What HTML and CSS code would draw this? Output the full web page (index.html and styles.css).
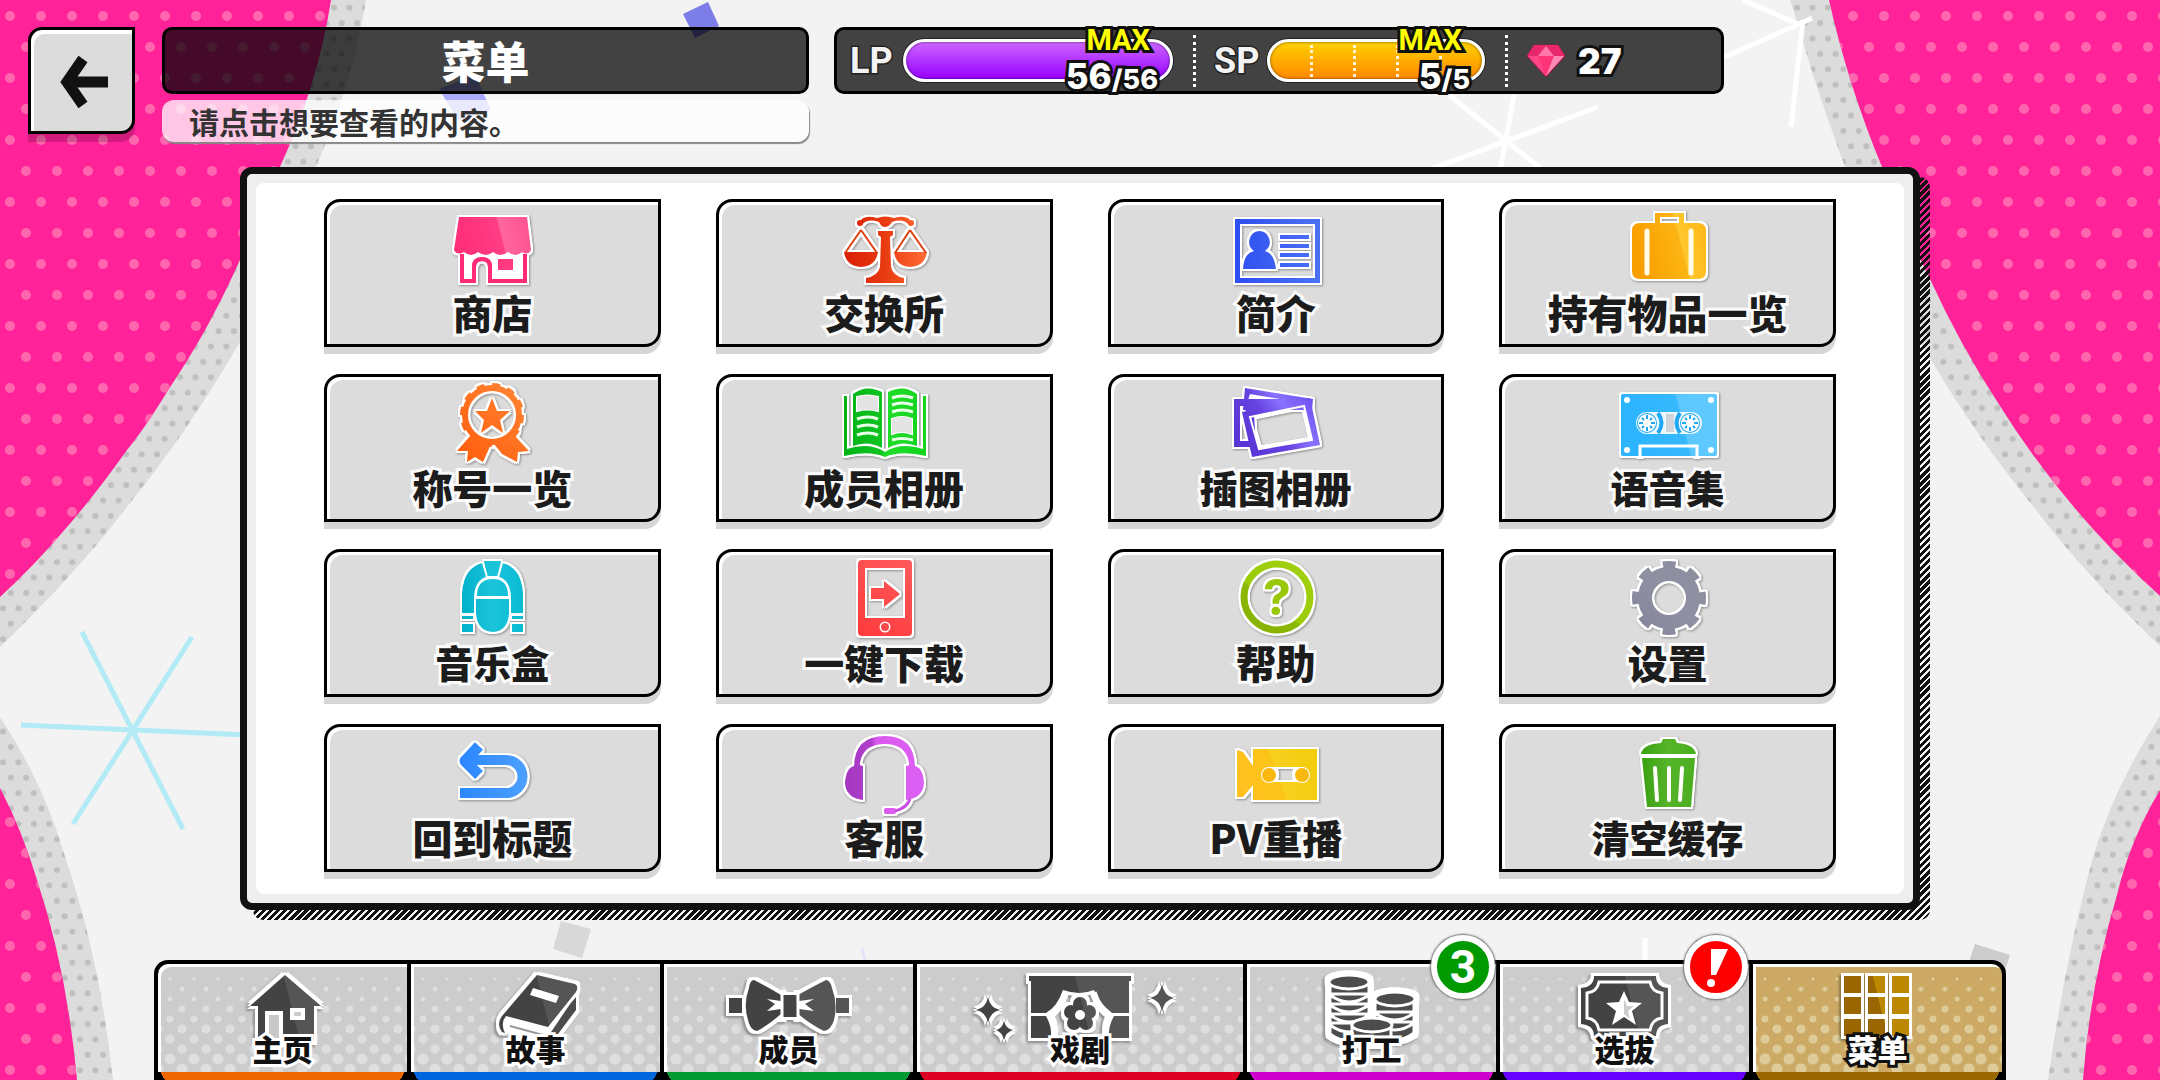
FILE: index.html
```html
<!DOCTYPE html>
<html lang="zh-CN">
  <head>
    <meta charset="utf-8" />
    <title>菜单</title>
    <link rel="stylesheet" href="styles.css">
  </head>
  <body>
    <!-- Background -->
    <svg class="backdrop" viewBox="0 0 2160 1080" preserveAspectRatio="none" aria-hidden="true">
      <defs>
        <pattern id="dots-left" x="-5" y="1" width="31" height="62" patternUnits="userSpaceOnUse">
          <circle cx="15" cy="15" r="5" fill="#ff66ae" />
          <circle cx="0" cy="46" r="5" fill="#ff66ae" />
          <circle cx="31" cy="46" r="5" fill="#ff66ae" />
        </pattern>
        <pattern id="dots-right" x="9" y="1" width="31" height="62" patternUnits="userSpaceOnUse">
          <circle cx="15" cy="15" r="5" fill="#ff66ae" />
          <circle cx="0" cy="46" r="5" fill="#ff66ae" />
          <circle cx="31" cy="46" r="5" fill="#ff66ae" />
        </pattern>
        <pattern id="dots-gray" x="3" y="0" width="15.4" height="30.8" patternUnits="userSpaceOnUse">
          <circle cx="7.7" cy="7.7" r="3" fill="#bfbfbf" />
          <circle cx="0" cy="23.1" r="3" fill="#bfbfbf" />
          <circle cx="15.4" cy="23.1" r="3" fill="#bfbfbf" />
        </pattern>
        <path id="edge-tl" d="M0 0H366Q352 85 315 169C285 240 272 290 240 342C200 410 165 460 133 499Q80 570 0 647Z" />
        <path id="edge-bl" d="M0 717Q45 785 67 863Q100 960 113 1080H0Z" />
        <path id="edge-tr" d="M1790 0L1800 31Q1815 85 1845 167Q1870 255 1930 358Q1975 435 2033 506Q2085 575 2160 646V0Z" />
        <path id="edge-br" d="M2160 716Q2115 785 2093 857Q2065 960 2048 1080H2160Z" />
        <path id="pink-tl" d="M0 0H331Q318 85 279 169Q262 220 240 260C215 315 195 350 167 392Q145 428 127 450Q95 495 67 527Q35 565 0 597Z" />
        <path id="pink-bl" d="M0 788Q22 830 37 880Q67 970 77 1080H0Z" />
        <path id="pink-tr" d="M1829 0Q1848 85 1882 167Q1903 225 1930 279Q1960 345 2000 406Q2065 510 2160 596V0Z" />
        <path id="pink-br" d="M2160 790Q2130 840 2117 895Q2090 985 2083 1080H2160Z" />
      </defs>
      <rect width="2160" height="1080" fill="#f3f3f3" />
      <g fill="#dcdcdc">
        <use href="#edge-tl" /><use href="#edge-bl" /><use href="#edge-tr" /><use href="#edge-br" />
      </g>
      <g fill="url(#dots-gray)">
        <use href="#edge-tl" /><use href="#edge-bl" /><use href="#edge-tr" /><use href="#edge-br" />
      </g>
      <g fill="#ff2299">
        <use href="#pink-tl" /><use href="#pink-bl" /><use href="#pink-tr" /><use href="#pink-br" />
      </g>
      <g fill="url(#dots-left)"><use href="#pink-tl" /><use href="#pink-bl" /></g>
      <g fill="url(#dots-right)"><use href="#pink-tr" /><use href="#pink-br" /></g>
      <g stroke="#b2eaf5" stroke-width="5">
        <path d="M21 725L247 735M82 632L183 829M192 637L73 824" />
      </g>
      <g stroke="#fff" stroke-width="5" fill="none">
        <path d="M1598 107L1415 175M1449 95L1545 172M1514 95L1500 172" />
        <path d="M1706 65L1797 25L1812 18M1743 0L1800 25M1803 20L1791 127M1645 938V962" />
      </g>
      <path d="M683 14L708 2L719 26L695 38Z" fill="#7d7de8" />
      <path d="M439 89L475 75L491 110L458 120Z" fill="#aaaaff" />
      <path d="M561 921L591 929L582 958L553 949Z" fill="#d8d8d8" />
      <path d="M1975 944L2010 955L2005 970L1969 962Z" fill="#cccccc" />
      <path d="M862 948L865 962" stroke="#e4e4fb" stroke-width="3" />
    </svg>

    <!-- Icon colours -->
    <svg class="defs" aria-hidden="true">
      <defs>
        <linearGradient id="g-shop" gradientUnits="userSpaceOnUse" x1="10" y1="0" x2="90" y2="-20"><stop offset="0" stop-color="#ff2f78" /><stop offset=".48" stop-color="#ff3d85" /><stop offset=".5" stop-color="#ff669e" /><stop offset="1" stop-color="#ff4a8c" /></linearGradient>
        <linearGradient id="g-scale" gradientUnits="userSpaceOnUse" x1="10" y1="0" x2="90" y2="0"><stop offset="0" stop-color="#d81e06" /><stop offset=".5" stop-color="#e83a10" /><stop offset="1" stop-color="#ff6a33" /></linearGradient>
        <linearGradient id="g-id" gradientUnits="userSpaceOnUse" x1="10" y1="0" x2="90" y2="0"><stop offset="0" stop-color="#2f4ff0" /><stop offset="1" stop-color="#4a70f5" /></linearGradient>
        <linearGradient id="g-case" gradientUnits="userSpaceOnUse" x1="10" y1="0" x2="90" y2="-20"><stop offset="0" stop-color="#f9a000" /><stop offset=".5" stop-color="#fdb514" /><stop offset=".52" stop-color="#ffc72e" /><stop offset="1" stop-color="#fdb10c" /></linearGradient>
        <linearGradient id="g-medal" gradientUnits="userSpaceOnUse" x1="10" y1="80" x2="90" y2="0"><stop offset="0" stop-color="#ff5a08" /><stop offset="1" stop-color="#ff8a3a" /></linearGradient>
        <linearGradient id="g-book" gradientUnits="userSpaceOnUse" x1="10" y1="0" x2="90" y2="0"><stop offset="0" stop-color="#00b418" /><stop offset=".48" stop-color="#12c41f" /><stop offset=".5" stop-color="#20dc28" /><stop offset="1" stop-color="#14d41e" /></linearGradient>
        <linearGradient id="g-photo" gradientUnits="userSpaceOnUse" x1="10" y1="80" x2="90" y2="20"><stop offset="0" stop-color="#5230d0" /><stop offset=".5" stop-color="#6643e0" /><stop offset=".7" stop-color="#8a72ff" /><stop offset="1" stop-color="#6e4cf2" /></linearGradient>
        <linearGradient id="g-tape" gradientUnits="userSpaceOnUse" x1="3" y1="0" x2="99" y2="-24"><stop offset="0" stop-color="#2db4ff" /><stop offset=".49" stop-color="#36b8fc" /><stop offset=".51" stop-color="#5cc8ff" /><stop offset="1" stop-color="#62caff" /></linearGradient>
        <linearGradient id="g-juke" gradientUnits="userSpaceOnUse" x1="20" y1="0" x2="80" y2="0"><stop offset="0" stop-color="#00b0cc" /><stop offset=".5" stop-color="#1cc4da" /><stop offset="1" stop-color="#08bcd4" /></linearGradient>
        <linearGradient id="g-phone" gradientUnits="userSpaceOnUse" x1="25" y1="80" x2="78" y2="0"><stop offset="0" stop-color="#ff3a3c" /><stop offset="1" stop-color="#ff5c5c" /></linearGradient>
        <linearGradient id="g-help" gradientUnits="userSpaceOnUse" x1="20" y1="80" x2="80" y2="0"><stop offset="0" stop-color="#86b000" /><stop offset=".4" stop-color="#8cb800" /><stop offset=".42" stop-color="#9ccc08" /><stop offset="1" stop-color="#a0d010" /></linearGradient>
        <linearGradient id="g-gear" gradientUnits="userSpaceOnUse" x1="15" y1="80" x2="88" y2="0"><stop offset="0" stop-color="#83839a" /><stop offset=".5" stop-color="#9090a4" /><stop offset="1" stop-color="#8a8c9a" /></linearGradient>
        <linearGradient id="g-back" gradientUnits="userSpaceOnUse" x1="15" y1="0" x2="85" y2="0"><stop offset="0" stop-color="#2a86ff" /><stop offset="1" stop-color="#4da0ff" /></linearGradient>
        <linearGradient id="g-head" gradientUnits="userSpaceOnUse" x1="10" y1="0" x2="90" y2="0"><stop offset="0" stop-color="#a436c0" /><stop offset=".35" stop-color="#b040cc" /><stop offset=".4" stop-color="#dc58f0" /><stop offset="1" stop-color="#dc60f4" /></linearGradient>
        <linearGradient id="g-cam" gradientUnits="userSpaceOnUse" x1="10" y1="60" x2="92" y2="30"><stop offset="0" stop-color="#ffc020" /><stop offset=".5" stop-color="#fcc418" /><stop offset=".52" stop-color="#f8d020" /><stop offset="1" stop-color="#f2cc0c" /></linearGradient>
        <linearGradient id="g-trash" gradientUnits="userSpaceOnUse" x1="22" y1="0" x2="78" y2="0"><stop offset="0" stop-color="#3aa010" /><stop offset=".5" stop-color="#55b42a" /><stop offset="1" stop-color="#4aae1e" /></linearGradient>
        <linearGradient id="g-dark" gradientUnits="userSpaceOnUse" x1="0" y1="25" x2="140" y2="-10"><stop offset=".5" stop-color="#434343" /><stop offset=".5" stop-color="#555555" /></linearGradient>
        <linearGradient id="g-dark-wide" gradientUnits="userSpaceOnUse" x1="0" y1="60" x2="240" y2="0"><stop offset=".5" stop-color="#434343" /><stop offset=".5" stop-color="#555555" /></linearGradient>
        <linearGradient id="g-gold" gradientUnits="userSpaceOnUse" x1="0" y1="45" x2="140" y2="10"><stop offset=".5" stop-color="#996600" /><stop offset=".5" stop-color="#bb8800" /></linearGradient>
      </defs>
    </svg>

    <div class="screen">
      <header class="top">
        <button class="back" type="button" aria-label="返回">
          <svg viewBox="0 0 60 60"><path d="M56 31H15M31 8L15 31L31 54" fill="none" stroke="#111" stroke-width="11" /></svg>
        </button>
        <div class="heading">
          <h1 class="title">菜单</h1>
          <p class="hint">请点击想要查看的内容。</p>
        </div>
        <div class="status">
          <span class="status-name">LP</span>
          <div class="gauge gauge-lp">
            <span class="gauge-max">MAX</span>
            <span class="gauge-value">56<small>/56</small></span>
          </div>
          <i class="divider"></i>
          <span class="status-name">SP</span>
          <div class="gauge gauge-sp">
            <i class="notch"></i><i class="notch"></i><i class="notch"></i><i class="notch"></i>
            <span class="gauge-max">MAX</span>
            <span class="gauge-value">5<small>/5</small></span>
          </div>
          <i class="divider"></i>
          <svg class="gem" viewBox="0 0 40 34" aria-hidden="true">
            <path d="M8 1H32L39 12L20 33L1 12Z" fill="#ff4488" stroke="#8c1440" />
            <path d="M8 1H32L39 12H1Z" fill="#e8286c" />
            <path d="M12 12L20 2L28 12Z" fill="#ff77aa" />
            <path d="M12 12H28L20 32Z" fill="#ff3377" />
            <path d="M28 12H38L20 32Z" fill="#ff88b4" />
          </svg>
          <span class="gem-count">27</span>
        </div>
      </header>

      <main class="panel">
        <div class="grid">
          <button class="tile" type="button">
            <svg class="icon" viewBox="0 0 100 84">
              <path d="M17 12H85L89 45Q86 51 80 47Q74 53 66 47Q58 53 51 47Q44 53 36 47Q29 53 22 47Q15 51 12 45Z" fill="url(#g-shop)" />
              <path d="M20 49V76H32V62Q32 54 40 54Q48 54 48 62V76H83V49" fill="none" stroke="#ff2b76" stroke-width="4" />
              <path d="M24 50H80V73H51V60Q48 51 40 51Q30 51 29 60V73H24Z" fill="#fff" opacity=".7" />
              <path d="M32 76V62Q32 54 40 54Q48 54 48 62V76" fill="none" stroke="#ff2b76" stroke-width="4" />
              <rect x="56" y="54" width="15" height="11" fill="#ff3a80" />
            </svg>
            商店
          </button>
          <button class="tile" type="button">
            <svg class="icon" viewBox="0 0 100 84">
              <g fill="url(#g-scale)">
                <circle cx="26" cy="18" r="3" /><circle cx="77" cy="18" r="3" />
                <path d="M25 18Q29 9 43 13Q51 10 60 13Q74 9 78 18L75 20Q69 13 58 17Q55 22 51 22Q47 22 45 17Q33 13 28 20Z" />
                <path d="M44 26H59V30L56 32L57 62Q59 71 70 73V78H32V73Q44 71 46 62L47 32L44 30Z" />
                <path d="M10 47H44Q42 61 27 62Q12 61 10 47ZM60 47H93Q91 61 76 62Q62 61 60 47Z" />
                <path d="M27 25L11 48M27 25L43 48M76 25L61 48M76 25L92 48" stroke="#e0400f" stroke-width="2" />
              </g>
            </svg>
            交换所
          </button>
          <button class="tile" type="button">
            <svg class="icon" viewBox="0 0 100 84">
              <g fill="url(#g-id)">
                <path fill-rule="evenodd" d="M9 14H94V78H9ZM14 19V73H89V19Z" />
                <path d="M33 26A11 11 0 0 1 39 46Q48 48 50 64H17Q18 48 28 46A11 11 0 0 1 33 26Z" />
                <path d="M54 30H83V34H54ZM54 39H83V43H54ZM54 48H83V52H54ZM54 58H83V62H54Z" />
              </g>
            </svg>
            简介
          </button>
          <button class="tile" type="button">
            <svg class="icon" viewBox="0 0 100 84">
              <path fill-rule="evenodd" d="M22 18H37V8H66V18H80Q88 18 88 26V66Q88 74 80 74H22Q14 74 14 66V26Q14 18 22 18ZM42 12V18H61V12Z" fill="url(#g-case)" />
              <path d="M29 26V68M73 26V68" stroke="#fffbe8" stroke-width="5" stroke-linecap="round" />
            </svg>
            持有物品一览
          </button>

          <button class="tile" type="button">
            <svg class="icon" viewBox="0 0 100 84">
              <g fill="none" stroke="url(#g-medal)">
                <circle cx="50" cy="35" r="27" stroke-width="6" />
                <circle cx="50" cy="35" r="30" stroke-width="4" stroke-dasharray="8 7.7" />
              </g>
              <path d="M50 18L55 31H68L58 40L61 53L50 45L39 53L42 40L33 31H45Z" fill="url(#g-medal)" />
              <path d="M29 55Q38 65 49 64L41 82L33 77L25 82L26 71H15ZM72 55Q63 65 52 64L60 74L75 82L76 72L87 71Z" fill="url(#g-medal)" />
            </svg>
            称号一览
          </button>
          <button class="tile" type="button">
            <svg class="icon" viewBox="0 0 100 84">
              <g fill="url(#g-book)">
                <path d="M19 14Q32 4 48 12V68Q34 60 19 66Z" />
                <path d="M83 14Q70 4 54 12V68Q68 60 83 66Z" />
                <path d="M10 16H13V69Q35 62 51 72Q67 62 89 69V16H92V76Q67 70 51 77Q35 70 10 76Z" />
              </g>
              <path d="M23 17Q33 14 44 17V31Q33 28 23 31ZM58 39Q68 35 78 39V54Q68 50 58 54Z" fill="#e4e4e4" stroke="#fff" stroke-width="2" />
              <path d="M23 39Q34 35 44 39M23 47Q34 43 44 47M23 55Q34 51 44 55M58 18Q68 14 79 18M58 25Q68 21 79 25M58 32Q68 28 79 32M58 60Q68 57 79 60" fill="none" stroke="#e8ffe8" stroke-width="3" />
            </svg>
            成员相册
          </button>
          <button class="tile tile-small" type="button">
            <svg class="icon" viewBox="0 0 100 84">
              <g fill="url(#g-photo)" fill-rule="evenodd">
                <path d="M19 8L87 19L86 30L17 30ZM24 14L22 20H60Z" />
                <path d="M8 19H60L28 34L30 67H8ZM14 26V61H24L19 26Z" />
                <path d="M16 32L84 18L94 65L26 77ZM24 37L33 69L86 60L78 26Z" />
              </g>
              <path d="M24 37L33 69L86 60L78 26Z" fill="none" stroke="#fff" stroke-width="2" />
            </svg>
            插图相册
          </button>
          <button class="tile tile-small" type="button">
            <svg class="icon" viewBox="0 0 100 84">
              <rect x="3" y="14" width="96" height="62" rx="2" fill="url(#g-tape)" />
              <rect x="18" y="32" width="66" height="22" rx="11" fill="#eaf7ff" />
              <path d="M48 34H56V52H48Z" fill="#d0d4d8" />
              <path d="M40 33Q47 43 40 53M62 33Q55 43 62 53" fill="none" stroke="#1ea8f4" stroke-width="4" />
              <g fill="#fff" stroke="#1ea8f4" stroke-width="2"><circle cx="29" cy="43" r="9" /><circle cx="72" cy="43" r="9" /></g>
              <g stroke="#1ea8f4" stroke-width="2">
                <path d="M29 35V39M29 47V51M21 43H25M33 43H37M24 38L26 40M32 46L34 48M34 38L32 40M24 48L26 46" />
                <path d="M72 35V39M72 47V51M64 43H68M76 43H80M67 38L69 40M75 46L77 48M77 38L75 40M67 48L69 46" />
              </g>
              <path d="M22 77V66H79V77" fill="none" stroke="#fff" stroke-width="3" />
              <g fill="#fff"><circle cx="9" cy="20" r="3" /><circle cx="93" cy="20" r="3" /><circle cx="9" cy="70" r="3" /><circle cx="93" cy="70" r="3" /></g>
            </svg>
            语音集
          </button>

          <button class="tile tile-small" type="button">
            <svg class="icon" viewBox="0 0 100 84">
              <g fill="url(#g-juke)">
                <path d="M20 58V38Q22 12 41 8L45 22Q34 27 33 42V58ZM81 58V38Q79 12 60 8L56 22Q67 27 68 42V58Z" />
                <path d="M42 6H59L56 22H45Z" />
                <path d="M35 41Q35 24 51 24Q66 24 66 41Z" />
                <path d="M34 44H67V58Q66 76 51 77Q35 76 34 58Z" />
                <path d="M20 61H31V64H20ZM70 61H81V64H70ZM20 69H31V77H20ZM70 69H81V77H70Z" />
              </g>
              <path d="M41 8L45 22H56L60 8M33 58V42Q34 22 51 22Q67 22 68 42V58M34 42H67" fill="none" stroke="#fff" stroke-width="2" />
            </svg>
            音乐盒
          </button>
          <button class="tile" type="button">
            <svg class="icon" viewBox="0 0 100 84">
              <path fill-rule="evenodd" d="M28 5H74Q78 5 78 9V77Q78 81 74 81H28Q24 81 24 77V9Q24 5 28 5ZM31 13V63H71V13Z" fill="url(#g-phone)" />
              <circle cx="51" cy="72" r="4" fill="#ff4a4c" stroke="#fff" stroke-width="3" />
              <path d="M37 33H50V26L66 39L50 52V44H37Z" fill="url(#g-phone)" />
            </svg>
            一键下载
          </button>
          <button class="tile" type="button">
            <svg class="icon" viewBox="0 0 100 84">
              <circle cx="51" cy="42" r="33" fill="none" stroke="url(#g-help)" stroke-width="7" />
              <text class="icon-question" x="51" y="60" text-anchor="middle">?</text>
            </svg>
            帮助
          </button>
          <button class="tile" type="button">
            <svg class="icon" viewBox="0 0 100 84">
              <g fill="none" stroke="url(#g-gear)">
                <circle cx="51" cy="43" r="24" stroke-width="14" />
                <circle cx="51" cy="43" r="32" stroke-width="10" stroke-dasharray="12 13.13" stroke-dashoffset="6" />
              </g>
            </svg>
            设置
          </button>

          <button class="tile" type="button">
            <svg class="icon" viewBox="0 0 100 84">
              <g fill="none" stroke="url(#g-back)" stroke-width="10">
                <path d="M24 30H64A16 16 0 0 1 64 63H18" />
                <path d="M37 16L23 31L37 45" stroke-width="11" stroke-linejoin="round" />
              </g>
            </svg>
            回到标题
          </button>
          <button class="tile" type="button">
            <svg class="icon" viewBox="0 0 100 84">
              <g fill="url(#g-head)">
                <path d="M29 36V70Q12 68 11 53Q12 38 20 36Q21 6 51 6Q80 6 81 36Q89 38 90 53Q89 68 72 70V36Q76 36 75 33Q72 14 51 14Q29 14 26 33Q25 36 29 36Z" />
                <rect x="50" y="78" width="12" height="6" rx="2" />
                <path d="M76 69Q73 78 61 81" fill="none" stroke="#c84fe0" stroke-width="3" />
              </g>
            </svg>
            客服
          </button>
          <button class="tile" type="button">
            <svg class="icon" viewBox="0 0 100 84">
              <path fill-rule="evenodd" d="M27 19H91V70H27V55L17 67H11V20L17 22L27 36ZM43 37Q36 38 36 45Q36 51 43 52H76Q83 51 83 45Q83 38 76 37Z" fill="url(#g-cam)" />
              <g fill="#f9b90c" stroke="#fff" stroke-width="2"><circle cx="43" cy="45" r="7" /><circle cx="76" cy="45" r="7" /></g>
            </svg>
            PV重播
          </button>
          <button class="tile tile-small" type="button">
            <svg class="icon" viewBox="0 0 100 84">
              <path d="M43 13L45 9H57L59 13Q76 14 78 24H23Q25 14 43 13ZM24 28H77L73 77H29Z" fill="url(#g-trash)" />
              <path d="M37 38L39 70M51 38V70M64 38L62 70" stroke="#fff" stroke-width="4" stroke-linecap="round" />
            </svg>
            清空缓存
          </button>
        </div>
      </main>

      <nav class="tabs">
        <a class="tab tab-home" href="#home">
          <svg class="tab-icon" viewBox="0 0 140 80">
            <path d="M72 9L108 40H101V76H45V40H37Z" fill="url(#g-dark)" />
            <path d="M54 76V47H68V76Z" fill="#c8c8c8" stroke="#fff" stroke-width="4" />
            <rect x="79" y="44" width="11" height="8" fill="#ccc" stroke="#fff" stroke-width="4" />
          </svg>
          <span class="tab-label">主页</span>
        </a>
        <a class="tab tab-story" href="#story">
          <svg class="tab-icon" viewBox="0 0 140 80">
            <path d="M71 9L109 18Q113 20 110 26L82 61L40 50Q34 57 39 67L36 66Q30 58 36 50Z" fill="url(#g-dark)" />
            <path d="M40 52L82 63L78 75L41 64Q37 58 40 52Z" fill="#fff" />
            <path d="M44 60L77 69" stroke="#999" stroke-width="2" />
            <path d="M104 38L110 31V44L86 76L81 72Z" fill="#4c4c4c" />
            <path d="M67 22L93 30L90 37L64 29Z" fill="#fff" />
          </svg>
          <span class="tab-label">故事</span>
        </a>
        <a class="tab tab-member" href="#member">
          <svg class="tab-icon" viewBox="0 0 140 80">
            <g fill="url(#g-dark)">
              <path d="M10 32H23V47H10ZM117 32H130V47H117Z" />
              <path d="M35 14Q47 20 62 29V48Q48 60 38 65Q31 64 29 54Q24 38 30 22Q31 14 35 14Z" />
              <path d="M107 14Q95 20 79 29V48Q94 60 105 65Q112 64 115 54Q119 38 113 22Q111 14 107 14Z" />
              <rect x="64" y="29" width="14" height="22" />
            </g>
            <path d="M63 27V53M79 27V53" stroke="#fff" stroke-width="3" />
            <path d="M62 35L48 33L56 38L48 45L62 43M80 35L95 33L86 38L95 45L80 43" fill="#fff" />
          </svg>
          <span class="tab-label">成员</span>
        </a>
        <a class="tab tab-drama" href="#drama">
          <svg class="tab-icon tab-icon-wide" viewBox="0 0 240 80">
            <g fill="url(#g-dark-wide)">
              <path d="M69 10H171V15H169V47H152Q137 35 134 24Q120 30 103 24Q98 40 86 47H71V15H69Z" />
              <path d="M71 50H86Q92 60 91 72H71ZM169 50H154Q148 60 149 72H169Z" />
              <circle cx="120" cy="38" r="7" /><circle cx="129" cy="46" r="7" /><circle cx="126" cy="57" r="7" /><circle cx="114" cy="57" r="7" /><circle cx="111" cy="46" r="7" /><circle cx="120" cy="48" r="8" />
              <path d="M28 31Q30 42 40 44Q30 46 28 57Q26 46 16 44Q26 42 28 31ZM44 55Q46 63 53 64Q46 66 44 74Q42 66 36 64Q42 63 44 55ZM202 18Q204 30 214 32Q204 34 202 46Q200 34 190 32Q200 30 202 18Z" />
            </g>
            <circle cx="120" cy="49" r="5" fill="#fff" />
            <path d="M104 26Q98 42 88 49Q95 60 93 72M147 72Q145 60 152 49Q140 42 135 26" fill="none" stroke="#fff" stroke-width="3" />
          </svg>
          <span class="tab-label">戏剧</span>
        </a>
        <a class="tab tab-work" href="#work">
          <svg class="tab-icon" viewBox="0 0 140 80">
            <g fill="#4c4c4c" stroke="#fff" stroke-width="3">
              <path d="M29 57V68Q48 82 68 68V57ZM29 48V59Q48 73 68 59V48ZM29 38V49Q48 63 68 49V38ZM29 28V39Q48 53 68 39V28ZM29 18V29Q48 43 68 29V18Z" />
              <ellipse cx="48" cy="16" rx="20" ry="7" />
              <path d="M74 56V67Q94 81 113 67V56ZM74 46V57Q94 71 113 57V46ZM74 36V47Q94 61 113 47V36Z" />
              <ellipse cx="94" cy="33" rx="20" ry="7" />
              <path d="M51 60V73Q71 87 90 73V60Z" />
              <ellipse cx="71" cy="59" rx="20" ry="7" />
            </g>
          </svg>
          <span class="tab-label">打工</span>
          <span class="badge badge-green">3</span>
        </a>
        <a class="tab tab-select" href="#select">
          <svg class="tab-icon" viewBox="0 0 140 80">
            <path d="M40 10H102Q102 21 114 22V58Q102 59 102 70H40Q40 59 27 58V22Q40 21 40 10Z" fill="url(#g-dark)" />
            <path d="M45 16H96Q98 26 108 27V52Q98 53 96 64H45Q43 53 33 52V27Q43 26 45 16Z" fill="none" stroke="#fff" stroke-width="3" />
            <path d="M70 25L75 36L88 37L78 45L82 59L70 51L58 59L62 45L52 37L65 36Z" fill="#fff" />
            <path d="M70 33L73 40L80 40L74 45L76 53L70 48Z" fill="#ccc" />
          </svg>
          <span class="tab-label">选拔</span>
          <span class="badge badge-red">
            <svg viewBox="0 0 64 64" role="img" aria-label="!"><path d="M27 14H44L32 40H27Z" fill="#fff" /><ellipse cx="27" cy="48" rx="4" ry="4" fill="#fff" /></svg>
          </span>
        </a>
        <a class="tab tab-menu" href="#menu" aria-current="page">
          <svg class="tab-icon" viewBox="0 0 140 80">
            <g fill="url(#g-gold)">
              <path d="M37 10H54V27H37ZM61 10H78V27H61ZM85 10H102V27H85ZM37 31H54V48H37ZM61 31H78V48H61ZM85 31H102V48H85ZM37 53H54V70H37ZM61 53H78V70H61ZM85 53H102V70H85Z" />
            </g>
          </svg>
          <span class="tab-label">菜单</span>
        </a>
      </nav>
    </div>
  </body>
</html>
```

FILE: styles.css
```css
* {
  box-sizing: border-box;
}
html,
body {
  margin: 0;
  padding: 0;
  height: 100%;
}
body {
  font-family: "Noto Sans CJK SC", "Noto Sans", sans-serif;
  background-color: #f3f3f3;
  color: #222;
  overflow: hidden;
}

.backdrop {
  position: absolute;
  top: 0;
  left: 0;
  width: 100%;
  height: 100%;
}

.defs {
  position: absolute;
  width: 0;
  height: 0;
}

.screen {
  position: relative;
  z-index: 0;
  display: flex;
  flex-direction: column;
  height: 100%;
}

/* Top bar */
.top {
  display: flex;
  align-items: flex-start;
  padding: 27px 28px 0;
}

.back {
  display: flex;
  align-items: center;
  justify-content: center;
  width: 107px;
  height: 107px;
  margin-right: 27px;
  padding: 0;
  border: 3px solid #000;
  border-radius: 14px 0 14px 0;
  background-color: #dcdcdc;
  box-shadow: inset 3px 4px 0 #fff, 0 8px 0 rgba(0, 0, 0, 0.18);
  cursor: pointer;
}

.back svg {
  width: 60px;
  height: 60px;
}

.heading {
  flex: 0 1 647px;
  margin-right: 25px;
}

.title {
  margin: 0 0 6px;
  border: 3px solid #000;
  border-radius: 10px;
  background-color: rgba(0, 0, 0, 0.73);
  color: #fff;
  font-size: 44px;
  font-weight: 900;
  line-height: 61px;
  text-align: center;
}

.hint {
  margin: 0;
  padding: 0 27px;
  border-radius: 12px;
  background-color: rgba(255, 255, 255, 0.75);
  box-shadow: 1px 2px 1px #888;
  color: #333;
  font-size: 30px;
  font-weight: bold;
  line-height: 42px;
}

.status {
  flex: 0 1 890px;
  display: flex;
  align-items: center;
  height: 67px;
  padding: 0 13px;
  border: 3px solid #000;
  border-radius: 10px;
  background-color: #424242;
}

.status-name {
  width: 53px;
  color: #f3f3f3;
  font-family: "Roboto", sans-serif;
  font-size: 36px;
  font-weight: bold;
  line-height: 60px;
  -webkit-text-stroke: 3px #222;
  paint-order: stroke fill;
}

.gauge {
  position: relative;
  display: flex;
  justify-content: space-evenly;
  width: 270px;
  height: 43px;
  border: 3px solid #fff;
  border-radius: 22px;
  box-shadow: 0 0 0 1px #222, inset 0 0 3px rgba(0, 0, 0, 0.6);
}
.gauge-lp {
  background-image: linear-gradient(#cc66ff, #9900ff);
}
.gauge-sp {
  width: 218px;
  background-image: linear-gradient(#ffd000, #ff8800);
}

.notch {
  height: 32px;
  margin-top: 3px;
  border-left: 3px dotted rgba(255, 255, 255, 0.85);
}

.gauge-max,
.gauge-value {
  position: absolute;
  right: 12px;
  paint-order: stroke fill;
  -webkit-text-stroke: 6px #111;
  white-space: nowrap;
}
.gauge-max {
  top: -14px;
  right: 20px;
  color: #ffff00;
  font-family: "Roboto", sans-serif;
  font-size: 29px;
  font-weight: bold;
  line-height: 24px;
}
.gauge-value {
  top: 19px;
  color: #fff;
  font-family: "Inter", sans-serif;
  font-size: 35px;
  font-weight: 800;
  line-height: 30px;
}
.gauge-value small {
  font-size: 27px;
}

.divider {
  height: 52px;
  margin: 0 18px 0 20px;
  border-left: 3px dotted #fff;
}

.gem {
  width: 40px;
  height: 34px;
  margin-right: 12px;
}

.gem-count {
  color: #fff;
  font-family: "Inter", sans-serif;
  font-size: 35px;
  font-weight: 900;
  -webkit-text-stroke: 6px #111;
  paint-order: stroke fill;
}

/* Menu panel */
.panel {
  position: relative;
  margin: 25px 240px 0;
  border: 7px solid #111;
  border-radius: 12px;
  background-color: #eee;
  padding: 9px;
}
.panel::before {
  content: "";
  position: absolute;
  z-index: -1;
  top: 3px;
  left: 6px;
  right: -17px;
  bottom: -17px;
  border-radius: 10px;
  background-image: repeating-linear-gradient(135deg, #111 0 3px, transparent 3px 5px);
}

.grid {
  display: grid;
  grid-template-columns: repeat(4, 1fr);
  gap: 27px 55px;
  padding: 16px 68px 22px;
  border-radius: 8px;
  background-color: #fff;
}

.tile {
  display: flex;
  flex-direction: column;
  align-items: center;
  height: 148px;
  padding: 3px 0 0;
  border: 3px solid #000;
  border-radius: 16px 0 16px 0;
  background-color: #dcdcdc;
  box-shadow: inset 3px 3px 0 #fff, 0 7px 0 #d6d6d6;
  color: #1c1c1c;
  font-family: inherit;
  font-size: 40px;
  font-weight: 900;
  line-height: 46px;
  -webkit-text-stroke: 6px #fafafa;
  paint-order: stroke fill;
  cursor: pointer;
}
.tile-small {
  font-size: 38px;
}

.icon {
  flex: none;
  width: 100px;
  height: 84px;
  overflow: visible;
  -webkit-text-stroke: 0;
  filter: drop-shadow(2px 0 0 #fff) drop-shadow(-2px 0 0 #fff) drop-shadow(0 2px 0 #fff) drop-shadow(0 -2px 0 #fff) drop-shadow(1px 1px 1px rgba(0, 0, 0, 0.35));
}

.icon-question {
  fill: #98c808;
  font-family: "Inter", sans-serif;
  font-size: 50px;
  font-weight: bold;
}

/* Bottom tabs */
.tabs {
  display: flex;
  height: 120px;
  margin: auto 154px 0;
  border: solid #000;
  border-width: 4px 4px 0;
  border-radius: 14px 14px 0 0;
  background-color: #000;
}

.tab {
  --face: #cccccc;
  --dot: #dedede;
  --bar: #ee6600;
  position: relative;
  flex: 253 1 0;
  display: flex;
  flex-direction: column;
  align-items: center;
  margin-left: 4px;
  padding-top: 2px;
  background-color: var(--face);
  background-image:
    radial-gradient(circle, var(--dot) 1px, transparent 2px),
    radial-gradient(circle, var(--dot) 2px, transparent 3px),
    radial-gradient(circle, var(--dot) 2px, transparent 3px),
    radial-gradient(circle, var(--dot) 3px, transparent 4px),
    radial-gradient(circle, var(--dot) 3px, transparent 4px),
    radial-gradient(circle, var(--dot) 4px, transparent 5px),
    radial-gradient(circle, var(--dot) 4px, transparent 5px),
    radial-gradient(circle, var(--dot) 4px, transparent 5px),
    radial-gradient(circle, var(--dot) 5px, transparent 6px),
    radial-gradient(circle, var(--dot) 5px, transparent 6px);
  background-size: 24px 12px;
  background-repeat: repeat-x;
  background-position: 0 9px, 12px 19px, 0 29px, 12px 39px, 0 49px, 12px 59px, 0 69px, 12px 79px, 0 89px, 12px 99px;
  box-shadow: inset 3px 3px 0 #fff;
  color: #111;
  text-decoration: none;
}
.tab:first-child {
  margin-left: 0;
  border-top-left-radius: 10px;
}
.tab:last-child {
  border-top-right-radius: 10px;
}
/* coloured strip with cut corners */
.tab::after {
  content: "";
  position: absolute;
  left: 0;
  right: 0;
  bottom: 0;
  height: 8px;
  background-image: linear-gradient(60deg, #000 6px, transparent 6px), linear-gradient(-60deg, #000 6px, transparent 6px);
  background-color: var(--bar);
}

.tab-story {
  --bar: #0066dd;
}
.tab-member {
  --bar: #009933;
}
.tab-drama {
  --bar: #dd0022;
  flex-grow: 331;
}
.tab-work {
  --bar: #cc00cc;
}
.tab-select {
  --bar: #6600ff;
}
.tab-menu {
  --face: #ccaa66;
  --dot: #ddcc99;
  --bar: #996600;
}

.tab-icon {
  flex: none;
  width: 140px;
  height: 80px;
  filter: drop-shadow(3px 0 0 #fff) drop-shadow(-3px 0 0 #fff) drop-shadow(0 3px 0 #fff) drop-shadow(0 -3px 0 #fff) drop-shadow(-2px 2px 1px rgba(0, 0, 0, 0.3));
}
.tab-icon-wide {
  width: 240px;
}

.tab-label {
  position: relative;
  margin-top: -15px;
  font-size: 30px;
  font-weight: 900;
  line-height: 34px;
  -webkit-text-stroke: 6px #fff;
  paint-order: stroke fill;
}
.tab-menu .tab-label {
  color: #fff;
  -webkit-text-stroke-color: #111;
}

.badge {
  position: absolute;
  top: -29px;
  right: 1px;
  width: 64px;
  height: 64px;
  border: 6px solid #fff;
  border-radius: 50%;
  box-shadow: 0 0 2px 1px #666;
  color: #fff;
  font-family: "Roboto", sans-serif;
  font-size: 46px;
  font-weight: bold;
  line-height: 52px;
  text-align: center;
}
.badge svg {
  display: block;
  width: 64px;
  height: 64px;
  margin: -6px;
}
.badge-green {
  background-color: #009900;
}
.badge-red {
  background-color: #ff0000;
}
```
